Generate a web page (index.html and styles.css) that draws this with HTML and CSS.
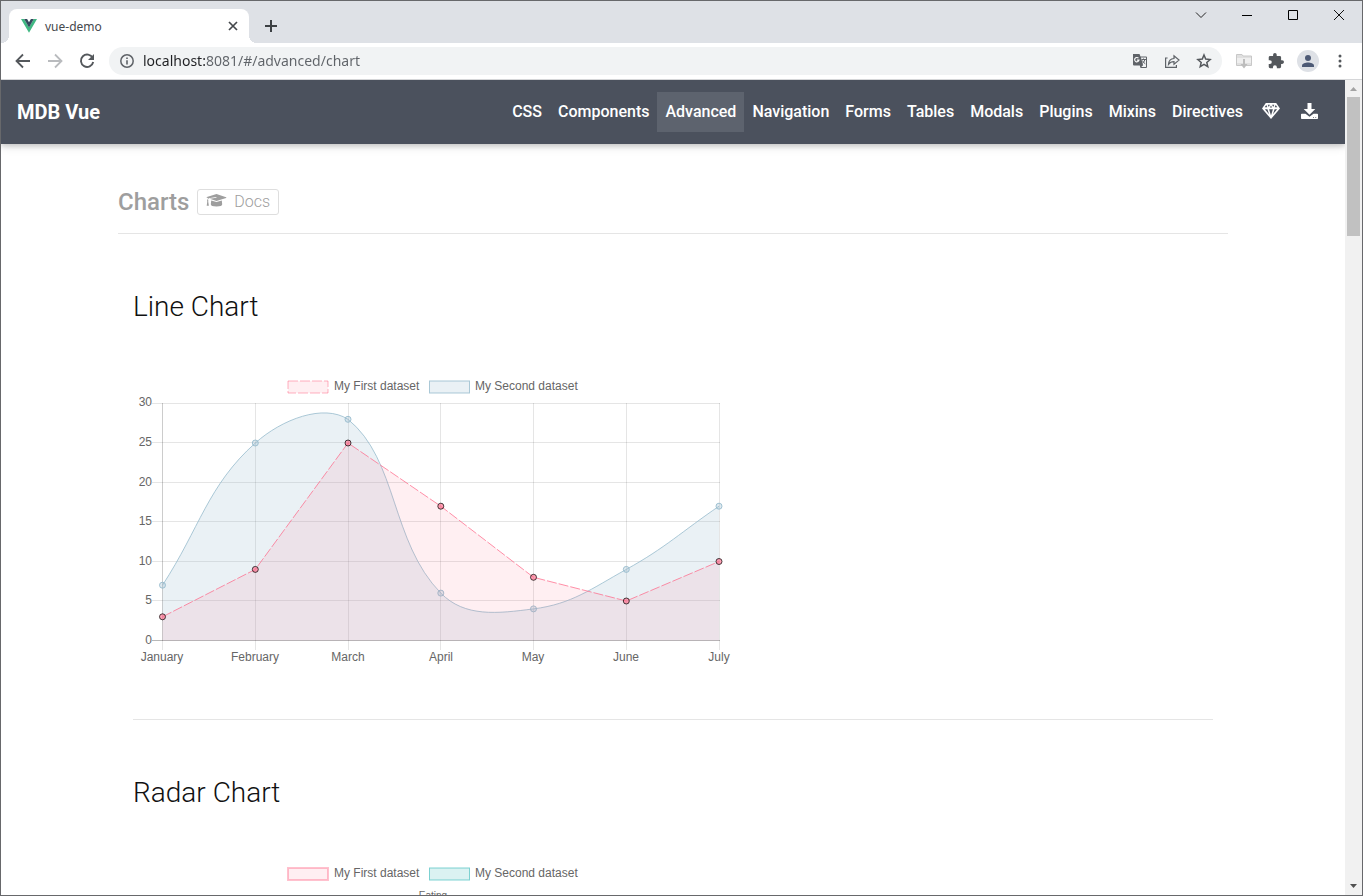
FILE: index.html
```html
<!DOCTYPE html>
<html lang="en">
<head>
<meta charset="utf-8">
<title>vue-demo</title>
<link rel="stylesheet" href="styles.css">
</head>
<body>
<div class="window">
  <header class="tab-strip">
    <div class="tab">
      <svg class="tab-logo" width="16" height="14" viewBox="0 0 16 14"><path fill="#41b883" d="M0 0h3.2L8 8.3 12.8 0H16L8 13.8z"/><path fill="#35495e" d="M3.2 0h2.9L8 3.3 9.900 0h2.900L8 8.400z"/></svg>
      <span class="tab-title">vue-demo</span>
      <button class="icon-button tab-close" aria-label="Close tab"><svg width="10" height="10" viewBox="0 0 10 10" stroke="#45484c" stroke-width="1.700"><path d="M1 1l8 8M9 1L1 9"/></svg></button>
    </div>
    <button class="icon-button new-tab" aria-label="New tab"><svg width="12" height="12" viewBox="0 0 12 12" fill="#3c4043"><path d="M5 0h2v5h5v2H7v5H5V7H0V5h5z"/></svg></button>
    <div class="window-controls">
      <button class="icon-button" aria-label="Search tabs"><svg width="12" height="12" viewBox="0 0 12 12" fill="none" stroke="#222"><path d="M1 3.500l5 5 5-5"/></svg></button>
      <button class="icon-button" aria-label="Minimize"><svg width="10" height="10" viewBox="0 0 10 10"><path d="M0 5h10v1H0z"/></svg></button>
      <button class="icon-button" aria-label="Maximize"><svg width="10" height="10" viewBox="0 0 10 10" fill="none" stroke="#000"><path d="M.5.5h9v9h-9z"/></svg></button>
      <button class="icon-button" aria-label="Close"><svg width="10" height="10" viewBox="0 0 10 10" stroke="#111"><path d="M0 0l10 10M10 0L0 10"/></svg></button>
    </div>
  </header>
  <div class="toolbar">
    <button class="icon-button" aria-label="Back"><svg width="16" height="16" viewBox="0 0 16 16" fill="none" stroke="#54585c" stroke-width="1.800"><path d="M15 8H2M8 1.500L1.500 8 8 14.500"/></svg></button>
    <button class="icon-button" aria-label="Forward"><svg width="16" height="16" viewBox="0 0 16 16" fill="none" stroke="#b9bbbe" stroke-width="1.800"><path d="M1 8h13M8 1.500L14.500 8 8 14.500"/></svg></button>
    <button class="icon-button" aria-label="Reload"><svg width="16" height="16" viewBox="0 0 16 16"><path fill="none" stroke="#54585c" stroke-width="1.900" d="M13.700 5A6.200 6.200 0 1 0 14.200 9"/><path fill="#54585c" d="M15 1v6H9z"/></svg></button>
    <div class="address">
      <svg width="16" height="16" viewBox="0 0 16 16"><circle cx="8" cy="8" r="6.200" fill="none" stroke="#5f6368" stroke-width="1.500"/><path fill="#5f6368" d="M7.200 4.400h1.600V6H7.200zM7.200 7.200h1.600v4.400H7.200z"/></svg>
      <input class="address-input" type="text" aria-label="Address" value="localhost:8081/#/advanced/chart">
      <button class="icon-button" aria-label="Translate"><svg width="16" height="16" viewBox="0 0 16 16"><path fill="#5f6368" d="M1 1h6.500l1 2.500H14q1 0 1 1V14q0 1-1 1H8.500l-.7-2.500H2q-1 0-1-1z"/><path fill="#f1f3f4" d="M8.900 4.600H14V14H9.200l1.900-1.800z"/><path fill="none" stroke="#fff" stroke-width="1.100" d="M6.500 5.200A2.200 2.200 0 1 0 7 7.100H4.900"/><path fill="none" stroke="#5f6368" d="M9.500 6.500H14M11.500 5.500v1M13 6.500q-.7 2.500-2.800 4M10.300 7.500q1 2 3 3.300"/></svg></button>
      <button class="icon-button" aria-label="Share"><svg width="16" height="16" viewBox="0 0 16 16" fill="none" stroke="#5f6368" stroke-width="1.200"><path d="M3.600 5H1.600v9.400h10.800V12M4.500 11.300c.2-3.700 2-5.600 5.500-5.800V2.800l5 4.300-5 4.200V8.700c-2.500 0-4.200.8-5.500 2.600z"/></svg></button>
      <button class="icon-button" aria-label="Bookmark"><svg width="16" height="16" viewBox="0 0 16 16" fill="none" stroke="#54585c" stroke-width="1.500"><path d="M8 2l1.700 4.100 4.400.4-3.300 2.900 1 4.300L8 11.400l-3.800 2.300 1-4.300-3.300-2.900 4.400-.4z"/></svg></button>
    </div>
    <button class="icon-button" aria-label="Downloader"><svg width="16" height="16" viewBox="0 0 16 16"><path fill="#e0e0e0" stroke="#c8c8c8" d="M.5 1.500H6l1 1.500h8.500v9.500H.5z"/><path fill="#efefef" d="M1 5h14v5H1z"/><path fill="#bdbdbd" d="M7 6h2v5h2.500L8 15.500 4.500 11H7z"/></svg></button>
    <button class="icon-button" aria-label="Extensions"><svg width="16" height="16" viewBox="1 1 22 22" fill="#54585c"><path d="M20.500 11H19V7a2 2 0 0 0-2-2h-4V3.500a2.500 2.500 0 0 0-5 0V5H4a2 2 0 0 0-2 2v3.800h1.500a2.700 2.700 0 0 1 0 5.400H2V20a2 2 0 0 0 2 2h3.800v-1.500a2.700 2.700 0 0 1 5.400 0V22H17a2 2 0 0 0 2-2v-4h1.500a2.500 2.500 0 0 0 0-5z"/></svg></button>
    <button class="icon-button avatar" aria-label="Profile"><svg width="12" height="12" viewBox="0 0 12 12" fill="#4d5a75"><circle cx="6" cy="3" r="3"/><path d="M0 12v-1.600C0 8.300 3.500 7.400 6 7.400s6 .9 6 3V12z"/></svg></button>
    <button class="icon-button" aria-label="Menu"><svg width="16" height="16" viewBox="0 0 16 16" fill="#54585c"><circle cx="8" cy="3" r="1.500"/><circle cx="8" cy="8" r="1.500"/><circle cx="8" cy="13" r="1.500"/></svg></button>
  </div>
  <div class="viewport">
    <div class="page">
      <nav class="navbar">
        <a class="brand" href="#">MDB Vue</a>
        <div class="nav-links">
          <a href="#">CSS</a><a href="#">Components</a><a class="active" href="#">Advanced</a><a href="#">Navigation</a><a href="#">Forms</a><a href="#">Tables</a><a href="#">Modals</a><a href="#">Plugins</a><a href="#">Mixins</a><a href="#">Directives</a>
          <a class="nav-icon" href="#" aria-label="Pro"><svg width="18" height="16" viewBox="0 0 18 16"><path fill="#fff" d="M3.800 0h10.400L18 5.600 9 16 0 5.600z"/><path fill="#4b515d" d="M4.300 2l1 2.300H2.700zM13.700 2l1.600 2.300h-2.600zM7.900 1.700L6.800 3.900 5.700 1.700zM12.300 1.700l-1.100 2.200-1.100-2.200zM9 2.400l1.100 2H7.900zM2.900 6.300h2.500l1.700 4.900zM7.100 6.300h3.800L9 12.600zM12.600 6.300h2.500l-4.200 4.900z"/></svg></a>
          <a class="nav-icon" href="#" aria-label="Download"><svg width="17" height="16" viewBox="0 0 17 16"><path fill="#fff" d="M6.500 0h4v6h3.800L8.500 11.800 2.700 6h3.800z"/><path fill="#fff" d="M.8 10.700h3.700l4 3.100 4-3.100h3.700q.8 0 .8.800v3.700q0 .8-.8.800H.8q-.8 0-.8-.8v-3.700q0-.8.800-.8z"/><path fill="#4b515d" opacity=".7" d="M12 13.900h1v1h-1zM14.200 13.900h1v1h-1z"/></svg></a>
        </div>
      </nav>
      <main class="container">
        <div class="page-head">
          <h1>Charts</h1>
          <a class="docs" href="#"><svg width="21" height="14" viewBox="0 0 20 14" fill="#9e9e9e"><path d="M10 0l9.600 3.200q.7.300 0 .7L10 6.900 3.200 4.800 10 3.700l-.2-.8L2.300 4.200q-.8.700-.8 1.700.8.600.2 1.600l.7 4.300H.2L.8 7.600q-.7-.9.1-1.600.1-1.200.7-2L.4 3.700q-.7-.4 0-.6z"/><path d="M4.700 6.400L10 8l5.300-1.600.4 3.800q0 2.200-5.700 2.200t-5.700-2.200z"/></svg>Docs</a>
        </div>
        <section class="chart-section">
          <h2>Line Chart</h2>
          <svg class="chart" width="600" height="300" viewBox="0 0 600 300">
            <g class="legend">
              <rect class="pink-fill pink-line dashed" x="155" y="6" width="40" height="12"/>
              <text x="201" y="15">My First dataset</text>
              <rect class="blue-fill blue-line" x="296.500" y="6" width="40" height="12"/>
              <text x="342" y="15">My Second dataset</text>
            </g>
            <path class="grid" d="M19 28.500H587M19 67.500H587M19 107.500H587M19 146.500H587M19 186.500H587M19 225.500H587M122.500 28V275M215.500 28V275M307.500 28V275M400.500 28V275M493.500 28V275M586.500 28V275M29.500 266V275"/>
            <path class="axis" d="M29.500 28V266"/>
            <path class="axis baseline" d="M19 265.500H587"/>
            <path class="blue-fill" d="M29.500 210.200C66.600 153.300 74.800 110.400 122.300 68 149 44.100 190.700 28.500 215 44.300 264.900 84.700 257.600 166.800 307.800 218.100 331.800 242.600 364.700 238.500 400.500 233.900 438.900 229 458.200 213.800 493.300 194.400 532.400 172.800 548.900 156.500 586 131.200V265.500H29.500z"/>
            <path class="blue-line" d="M29.500 210.200C66.600 153.300 74.800 110.400 122.300 68 149 44.100 190.700 28.500 215 44.300 264.900 84.700 257.600 166.800 307.800 218.100 331.800 242.600 364.700 238.500 400.500 233.900 438.900 229 458.200 213.800 493.300 194.400 532.400 172.800 548.900 156.500 586 131.200"/>
            <g class="blue-point"><circle cx="29.500" cy="210.200" r="3"/><circle cx="122.300" cy="68" r="3"/><circle cx="215" cy="44.300" r="3"/><circle cx="307.800" cy="218.100" r="3"/><circle cx="400.500" cy="233.900" r="3"/><circle cx="493.300" cy="194.400" r="3"/><circle cx="586" cy="131.200" r="3"/></g>
            <path class="pink-fill" d="M29.500 241.800L122.300 194.400 215 68 307.800 131.200 400.500 202.300 493.300 226 586 186.500V265.500H29.500z"/>
            <path class="pink-line dashed strong" d="M29.500 241.800L122.300 194.400 215 68 307.800 131.200 400.500 202.300 493.300 226 586 186.500"/>
            <g class="pink-point"><circle cx="29.500" cy="241.800" r="3"/><circle cx="122.300" cy="194.400" r="3"/><circle cx="215" cy="68" r="3"/><circle cx="307.800" cy="131.200" r="3"/><circle cx="400.500" cy="202.300" r="3"/><circle cx="493.300" cy="226" r="3"/><circle cx="586" cy="186.500" r="3"/></g>
            <g class="y-labels"><text x="19" y="31">30</text><text x="19" y="71">25</text><text x="19" y="111">20</text><text x="19" y="150">15</text><text x="19" y="190">10</text><text x="19" y="229">5</text><text x="19" y="269">0</text></g>
            <g class="x-labels"><text x="29" y="286">January</text><text x="122" y="286">February</text><text x="215" y="286">March</text><text x="308" y="286">April</text><text x="400" y="286">May</text><text x="493" y="286">June</text><text x="586" y="286">July</text></g>
          </svg>
        </section>
        <section class="chart-section">
          <h2>Radar Chart</h2>
          <svg class="chart" width="600" height="300" viewBox="0 0 600 300">
            <rect class="pink-fill pink-line thick" x="155" y="7" width="40" height="12"/>
            <text x="201" y="16">My First dataset</text>
            <rect class="teal-fill teal-line" x="296.500" y="7" width="40" height="12"/>
            <text x="342" y="16">My Second dataset</text>
            <text class="radar-label" x="300" y="38">Eating</text>
          </svg>
        </section>
      </main>
    </div>
    <div class="scrollbar" aria-hidden="true">
      <svg width="17" height="17" viewBox="0 0 17 17" fill="#a3a3a3"><path d="M5 11l3.500-4 3.500 4z"/></svg>
      <div class="thumb"></div>
      <svg width="17" height="17" viewBox="0 0 17 17" fill="#505050"><path d="M5 6h7l-3.500 4z"/></svg>
    </div>
  </div>
</div>
</body>
</html>
```
FILE: styles.css
```css
* { box-sizing: border-box; }

body {
  margin: 0;
  font-family: Roboto, sans-serif;
  color: #212529;
  background: #fff;
}

a { color: inherit; text-decoration: none; }
svg { display: block; flex: none; }

.window {
  display: flex;
  flex-direction: column;
  height: 100vh;
  border: 1px solid #67686b;
  overflow: hidden;
}

.icon-button {
  display: flex;
  align-items: center;
  justify-content: center;
  padding: 0;
  border: 0;
  background: none;
}

.tab-strip {
  display: flex;
  flex: none;
  height: 42px;
  padding-left: 8px;
  background: #dee1e6;
}

.tab {
  position: relative;
  display: flex;
  align-items: center;
  width: 240px;
  margin-top: 8px;
  padding: 0 11px 0 12px;
  border-radius: 8px 8px 0 0;
  background: #fff;
}

.tab::before,
.tab::after {
  content: "";
  position: absolute;
  bottom: 0;
  width: 8px;
  height: 8px;
}

.tab::before { right: 100%; background: radial-gradient(circle at 0 0, transparent 8px, #fff 8px); }
.tab::after { left: 100%; background: radial-gradient(circle at 100% 0, transparent 8px, #fff 8px); }

.tab-title {
  flex: 1;
  margin-left: 8px;
  font: 12px "Noto Sans", sans-serif;
  color: #45484c;
}

.new-tab { width: 28px; height: 28px; margin: 11px 0 0 8px; }

.window-controls { display: flex; margin-left: auto; }
.window-controls .icon-button { width: 46px; height: 28px; }

.toolbar {
  display: flex;
  flex: none;
  align-items: center;
  gap: 16px;
  height: 37px;
  padding: 0 14px;
  border-bottom: 1px solid #d5d6d8;
  background: #fff;
}

.address {
  display: flex;
  flex: 1;
  align-items: center;
  gap: 16px;
  height: 28px;
  margin: 0 -2px;
  padding: 0 10px;
  border-radius: 14px;
  background: #f1f3f4;
}

.address-input {
  flex: 1;
  min-width: 0;
  height: 28px;
  margin-left: -8px;
  padding: 0 0 2px;
  border: 0;
  font: 14px "Noto Sans", sans-serif;
  background: linear-gradient(to right, #202124 62px, #5f6368 62px);
  background-clip: text;
  -webkit-background-clip: text;
  color: transparent;
}

.avatar {
  width: 22px;
  height: 22px;
  margin: 0 -3px;
  border-radius: 50%;
  background: #dee1e6;
}

.viewport { display: flex; flex: 1; min-height: 0; }
.page { flex: 1; min-width: 0; overflow: hidden; }

.navbar {
  display: flex;
  align-items: center;
  justify-content: space-between;
  height: 64px;
  padding: 0 16px;
  color: #fff;
  background: #4b515d;
  box-shadow: 0 2px 5px rgba(0, 0, 0, .16), 0 2px 10px rgba(0, 0, 0, .12);
}

.brand { font-size: 20px; font-weight: 700; }

.nav-links { display: flex; font-size: 16px; font-weight: 500; line-height: 24px; }
.nav-links a { padding: 8px; }
.nav-links .active { background: #5d636e; }
.nav-links .nav-icon { display: flex; align-items: center; justify-content: center; width: 39px; padding-bottom: 10px; }

.container { max-width: 1140px; margin: 0 auto; padding: 45px 15px 0; }

.page-head {
  display: flex;
  align-items: flex-start;
  gap: 8px;
  height: 45px;
  border-bottom: 1px solid #e5e5e5;
  color: #9e9e9e;
}

.page-head h1 { margin: 0; font-size: 24px; font-weight: 500; line-height: 26px; }

.docs {
  display: flex;
  align-items: center;
  gap: 7px;
  height: 26px;
  padding: 0 8px 2px;
  border: 1px solid #dedede;
  border-radius: 3px;
  font-size: 16px;
  font-weight: 300;
}

.chart-section {
  margin: 0 15px;
  padding: 55px 0 44px;
  border-bottom: 1px solid #e5e5e5;
}

.chart-section h2 {
  margin: 0 0 50px;
  font-size: 28px;
  font-weight: 300;
  line-height: 36px;
  color: #111;
}

.chart { max-width: 100%; }
.chart text { font: 12px "Liberation Sans", sans-serif; fill: #666; }
.chart .y-labels text { text-anchor: end; }
.chart .x-labels text { text-anchor: middle; }
.chart .radar-label { font-size: 10px; text-anchor: middle; }

.grid { fill: none; stroke: rgba(0, 0, 0, .1); }
.axis { fill: none; stroke: rgba(0, 0, 0, .2); }
.axis.baseline { stroke: rgba(0, 0, 0, .28); }

.chart path { fill: none; }
.chart .pink-fill { fill: rgba(255, 99, 132, .1); }
.chart .blue-fill { fill: rgba(151, 187, 205, .2); }
.chart .teal-fill { fill: rgba(75, 192, 192, .2); }
.pink-line { stroke: rgba(255, 99, 132, .5); }
.pink-line.strong { stroke: rgba(255, 99, 132, .7); }
.pink-line.thick { stroke: rgba(255, 99, 132, .4); stroke-width: 2px; }
.blue-line { stroke: rgba(151, 187, 205, .8); }
.teal-line { stroke: rgba(75, 192, 192, .7); }
.dashed { stroke-dasharray: 10 2; }
.blue-point { fill: rgba(151, 187, 205, .3); stroke: rgba(151, 187, 205, .9); }
.pink-point { fill: rgba(255, 99, 132, .6); stroke: rgba(0, 0, 0, .7); }

.scrollbar {
  display: flex;
  flex-direction: column;
  flex: none;
  width: 17px;
  background: #f1f1f1;
}

.thumb { height: 139px; margin: 0 2px auto; background: #c1c1c1; }
```
